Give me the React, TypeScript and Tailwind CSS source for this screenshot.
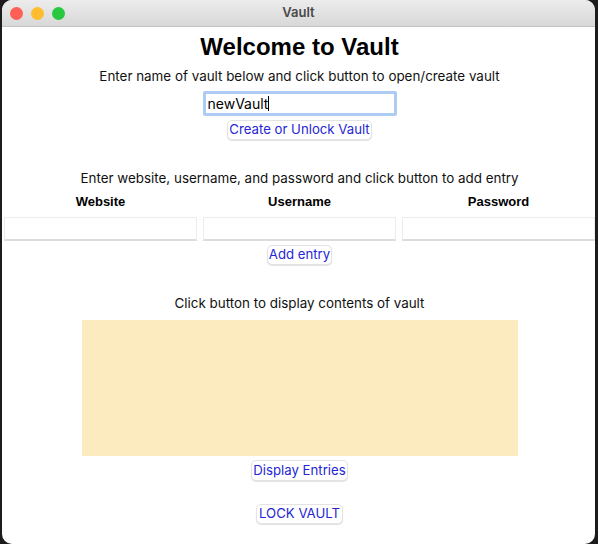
import React from "react";

const sans = { fontFamily: "Inter, 'Liberation Sans', sans-serif" };

function Btn({ children, w, h = 20 }: { children: React.ReactNode; w: number; h?: number }) {
  return (
    <div
      className="ml-[2px] flex items-center justify-center rounded-[5px] bg-white border border-[#e3e3e3] shadow-[0_1px_1px_rgba(0,0,0,0.12)] text-[13.2px] text-[#2626d4]"
      style={{ width: w, height: h, ...sans }}
    >
      {children}
    </div>
  );
}

function Field() {
  return <div className="h-[24px] bg-white border border-[#ececec] border-b-[2px] border-b-[#dcdcdc]" />;
}

export default function App() {
  return (
    <div className="w-[598px] h-[544px] bg-[#1c1c1c] pl-[2px] pr-[3px]">
      <div className="w-[593px] h-[544px] bg-white rounded-[10px] overflow-hidden flex flex-col items-center">
        <div className="w-full h-[27px] shrink-0 bg-gradient-to-b from-[#ececec] to-[#d8d8d8] border-b border-[#c4c4c4] relative flex items-center justify-center">
          <div className="absolute left-[8px] top-[7px] flex gap-[8px]">
            <div className="w-[13px] h-[13px] rounded-full bg-[#fe5f57]" />
            <div className="w-[13px] h-[13px] rounded-full bg-[#febc2e]" />
            <div className="w-[13px] h-[13px] rounded-full bg-[#28c840]" />
          </div>
          <span className="text-[13px] font-semibold text-[#4a4a4a]" style={sans}>Vault</span>
        </div>

        <div
          className="ml-[2px] mt-[4px] h-[32px] leading-[32px] text-[24px] font-bold text-black"
          style={{ fontFamily: "'Liberation Sans', Arial, sans-serif" }}
        >
          Welcome to Vault
        </div>

        <div className="ml-[2px] mt-[3px] h-[20px] leading-[20px] text-[13.4px] text-[#111]" style={sans}>
          Enter name of vault below and click button to open/create vault
        </div>

        <div className="ml-[2px] mt-[5px] w-[194px] h-[25px] rounded-[2px] border-[3px] border-[#acccf4] bg-white flex items-center">
          <span className="pl-[2px] text-[14px] text-black" style={sans}>newVault</span>
          <span className="w-px h-[15px] bg-black" />
        </div>

        <div className="mt-[4px]">
          <Btn w={145}>Create or Unlock Vault</Btn>
        </div>

        <div className="ml-[2px] mt-[28px] h-[20px] leading-[20px] text-[13.4px] text-[#111]" style={sans}>
          Enter website, username, and password and click button to add entry
        </div>

        <div
          className="mt-[4px] w-full pl-[2px] grid grid-cols-[193px_193px_193px] gap-[6px] h-[20px] leading-[20px] text-[13px] font-bold text-black text-center"
          style={{ fontFamily: "'Liberation Sans', Arial, sans-serif" }}
        >
          <div>Website</div>
          <div>Username</div>
          <div>Password</div>
        </div>

        <div className="mt-[5px] w-full pl-[2px] grid grid-cols-[193px_193px_193px] gap-[6px]">
          <Field />
          <Field />
          <Field />
        </div>

        <div className="mt-[4px]">
          <Btn w={65}>Add entry</Btn>
        </div>

        <div className="ml-[2px] mt-[28px] h-[20px] leading-[20px] text-[13.4px] text-[#111]" style={sans}>
          Click button to display contents of vault
        </div>

        <div className="ml-[2px] mt-[7px] w-[436px] h-[136px] bg-[#fcebbf]" />

        <div className="mt-[4px]">
          <Btn w={97} h={21}>Display Entries</Btn>
        </div>

        <div className="mt-[23px]">
          <Btn w={87}>LOCK VAULT</Btn>
        </div>
      </div>
    </div>
  );
}
